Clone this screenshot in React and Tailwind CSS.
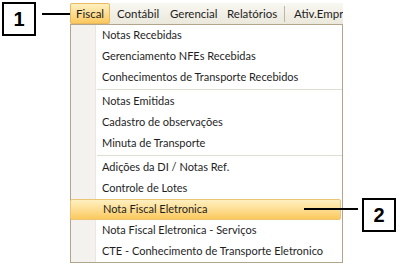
import React from "react";

const groups = [
  ["Notas Recebidas", "Gerenciamento NFEs Recebidas", "Conhecimentos de Transporte Recebidos"],
  ["Notas Emitidas", "Cadastro de observações", "Minuta de Transporte"],
  [
    "Adições da DI / Notas Ref.",
    "Controle de Lotes",
    "Nota Fiscal Eletronica",
    "Nota Fiscal Eletronica - Serviços",
    "CTE - Conhecimento de Transporte Eletronico",
  ],
];

const topMenu = [
  { label: "Contábil", w: "w-[53px]" },
  { label: "Gerencial", w: "w-[57px]" },
  { label: "Relatórios", w: "w-[57px]" },
];

const Callout = ({ label, className }) => (
  <div
    className={`absolute w-[34px] h-[34px] border-2 border-black bg-white flex items-center justify-center text-[20px] font-bold text-black ${className}`}
    style={{ fontFamily: '"Liberation Sans", sans-serif' }}
  >
    {label}
  </div>
);

const MenuRow = ({ text, active }) => (
  <div
    className={`h-[21px] flex items-center pl-[32px] mr-[1px] whitespace-nowrap overflow-hidden ${
      active
        ? "bg-gradient-to-b from-[#fef0c0] to-[#fbc95c] border border-[#ecc475] rounded-[2px] pl-[31px]"
        : ""
    }`}
  >
    {text}
  </div>
);

const App = () => {
  return (
    <div
      className="relative w-[400px] h-[264px] bg-white overflow-hidden text-[11px] text-[#1e1e1e]"
      style={{ fontFamily: 'Lato, "Noto Sans", sans-serif' }}
    >
      {/* callouts */}
      <Callout label="1" className="left-[2px] top-[2px]" />
      <div className="absolute left-[42px] top-[13px] w-[28px] h-[2px] bg-black" />
      <Callout label="2" className="left-[362px] top-[198px]" />
      <div className="absolute left-[304px] top-[208px] w-[54px] h-[2px] bg-black z-10" />

      <div className="ml-[70px] pt-[3px] w-[273px]">
        {/* menu bar */}
        <div className="h-[21px] flex items-center bg-gradient-to-b from-[#f8f7f1] to-[#ebe8dc] overflow-hidden text-[11.5px]">
          <div className="h-[21px] w-[40px] shrink-0 flex items-center justify-center bg-gradient-to-b from-[#fef0c0] to-[#fbc95c] border border-[#e9b85f] rounded-[2px]">
            Fiscal
          </div>
          <div className="flex items-center ml-[7px] shrink-0">
            {topMenu.map((m) => (
              <span key={m.label} className={`${m.w} shrink-0`}>
                {m.label}
              </span>
            ))}
          </div>
          <div className="w-[1px] h-[16px] bg-[#bdb7a6] shrink-0" />
          <span className="ml-[9px] whitespace-nowrap shrink-0">Ativ.Empresariais</span>
        </div>

        {/* dropdown */}
        <div className="relative border border-[#b3a58c] bg-white h-[239px] flex">
          <div className="w-[25px] bg-[#f3f2ee] border-r border-[#e9e7e0]" />
          <div className="flex-1 min-w-0 -ml-[26px] relative">
            {groups.map((items, gi) => (
              <div key={gi}>
                {gi > 0 && (
                  <div className="h-[3px] flex items-center pl-[27px]">
                    <div className="h-[1px] w-full bg-[#e2ddd2]" />
                  </div>
                )}
                {items.map((t) => (
                  <MenuRow key={t} text={t} active={t === "Nota Fiscal Eletronica"} />
                ))}
              </div>
            ))}
          </div>
        </div>
      </div>
    </div>
  );
};

export default App;
